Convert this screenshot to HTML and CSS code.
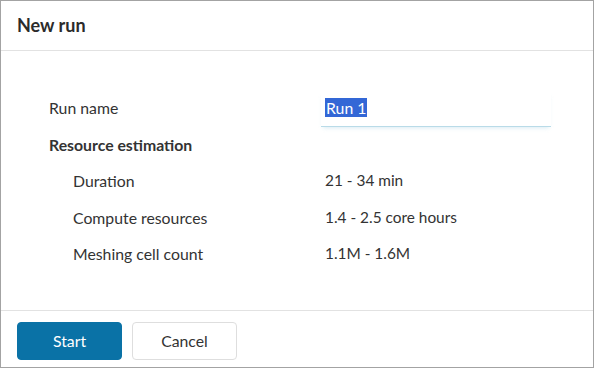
FILE: index.html
```html
<!DOCTYPE html>
<html>
<head>
<meta charset="utf-8">
<link rel="stylesheet" href="styles.css">
</head>
<body>
<div class="dialog">
  <div class="header">New run</div>
  <div class="content">
    <div class="grid">
      <div class="label first">Run name</div>
      <div class="input first"><span class="sel">Run 1</span></div>
      <div class="label bold full">Resource estimation</div>
      <div class="label sub">Duration</div>
      <div class="value">21 - 34 min</div>
      <div class="label sub">Compute resources</div>
      <div class="value">1.4 - 2.5 core hours</div>
      <div class="label sub">Meshing cell count</div>
      <div class="value">1.1M - 1.6M</div>
    </div>
  </div>
  <div class="footer">
    <button class="btn primary">Start</button>
    <button class="btn">Cancel</button>
  </div>
</div>
</body>
</html>
```
FILE: styles.css
```css
* { box-sizing: border-box; }
html, body { margin: 0; padding: 0; background: #fff; }
body { font-family: Lato, "Open Sans", sans-serif; color: #333; }
.dialog {
  width: 594px;
  height: 368px;
  border: 1px solid #a3a3a3;
  display: flex;
  flex-direction: column;
}
.header {
  height: 50px;
  border-bottom: 1px solid #e2e2e2;
  padding-left: 16px;
  padding-bottom: 2px;
  display: flex;
  align-items: center;
  font-size: 18px;
  font-weight: 700;
  color: #2b2b2b;
}
.content {
  flex: 1;
  padding: 40px 42px 0 48px;
}
.grid {
  display: grid;
  grid-template-columns: 272px 230px;
  grid-template-rows: 36px 34px 38px 36px 36px;
  font-size: 15.8px;
}
.label, .value { display: flex; align-items: center; }
.first { padding-bottom: 3px; }
.full { grid-column: 1 / 3; }
.bold { font-weight: 700; }
.sub { padding-left: 24px; }
.value { padding-left: 4px; font-size: 15.4px; }
.input {
  display: flex;
  align-items: center;
  padding-left: 4px;
  border-bottom: 1px solid #b9dbe8;
  box-shadow: 0 3px 4px -2px rgba(150, 200, 220, 0.35);
}
.sel {
  background: #3367d6;
  color: #fff;
  line-height: 19px;
  padding: 0 1px;
}
.footer {
  height: 57px;
  border-top: 1px solid #e2e2e2;
  padding: 11px 16px 0;
  display: flex;
  align-items: flex-start;
  gap: 10px;
}
.btn {
  width: 105px;
  height: 38px;
  padding-bottom: 3px;
  border-radius: 4px;
  border: 1px solid #dedede;
  background: #fff;
  font-family: Lato, "Open Sans", sans-serif;
  font-size: 15.8px;
  color: #333;
}
.primary {
  background: #0a72a6;
  border-color: #0a72a6;
  color: #fff;
}
```
